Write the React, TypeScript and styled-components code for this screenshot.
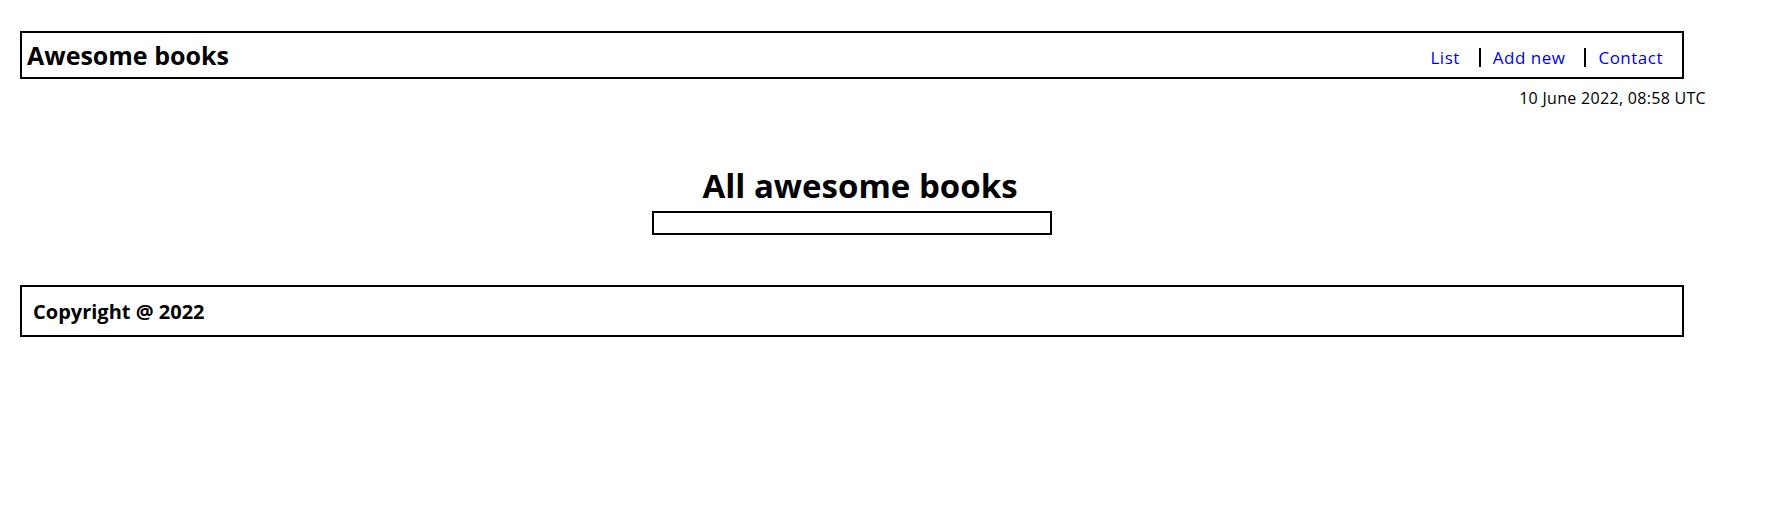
import React from "react";
import styled, { createGlobalStyle } from "styled-components";

const Global = createGlobalStyle`
  html, body { margin: 0; padding: 0; background: #fff; }
  body { font-family: "Open Sans", "Noto Sans", sans-serif; color: #000; }
  * { box-sizing: border-box; }
`;

const Page = styled.div`
  padding: 31px 0 0 20px;
  display: flex;
  flex-direction: column;
`;

const Header = styled.header`
  width: calc(100% - 91px);
  height: 48px;
  border: 2px solid #000;
  display: flex;
  align-items: center;
  justify-content: space-between;
  padding-left: 5px;
`;

const Brand = styled.h1`
  margin: 0;
  font-size: 25px;
  font-weight: 700;
  line-height: 30px;
`;

const Nav = styled.ul`
  list-style: none;
  display: flex;
  align-items: center;
  margin: 4px 0 0;
  padding: 0;
`;

const NavItem = styled.li<{ $sep?: boolean }>`
  padding: 0 19px 0 12px;
  border-left: 2px solid ${(p) => (p.$sep ? "#000" : "transparent")};
  line-height: 19px;
  font-size: 17px;
  letter-spacing: 0.5px;
`;

const NavLink = styled.a`
  color: #0000ee;
  text-decoration: none;
`;

const DateLine = styled.p`
  margin: 9px 0 0;
  padding-right: 69px;
  text-align: right;
  font-size: 16px;
  letter-spacing: 0.3px;
  line-height: 20px;
`;

const Main = styled.main`
  width: calc(100% - 91px);
  display: flex;
  flex-direction: column;
  align-items: center;
  margin-top: 57px;
`;

const Heading = styled.h2`
  margin: 0;
  padding-left: 16px;
  font-size: 33px;
  font-weight: 700;
  line-height: 42px;
`;

const BookList = styled.ul`
  margin: 4px 0 0;
  padding: 0;
  width: 400px;
  height: 24px;
  border: 2px solid #000;
  list-style: none;
`;

const Footer = styled.footer`
  width: calc(100% - 91px);
  height: 52px;
  margin-top: 50px;
  border: 2px solid #000;
  display: flex;
  align-items: center;
  padding-left: 11px;
`;

const Copy = styled.p`
  margin: 0;
  font-size: 20px;
  font-weight: 700;
`;

export default function App() {
  return (
    <>
      <Global />
      <Page>
        <Header>
          <Brand>Awesome books</Brand>
          <Nav>
            <NavItem>
              <NavLink href="#list">List</NavLink>
            </NavItem>
            <NavItem $sep>
              <NavLink href="#add">Add new</NavLink>
            </NavItem>
            <NavItem $sep>
              <NavLink href="#contact">Contact</NavLink>
            </NavItem>
          </Nav>
        </Header>
        <DateLine>10 June 2022, 08:58 UTC</DateLine>
        <Main>
          <Heading>All awesome books</Heading>
          <BookList />
        </Main>
        <Footer>
          <Copy>Copyright @ 2022</Copy>
        </Footer>
      </Page>
    </>
  );
}
